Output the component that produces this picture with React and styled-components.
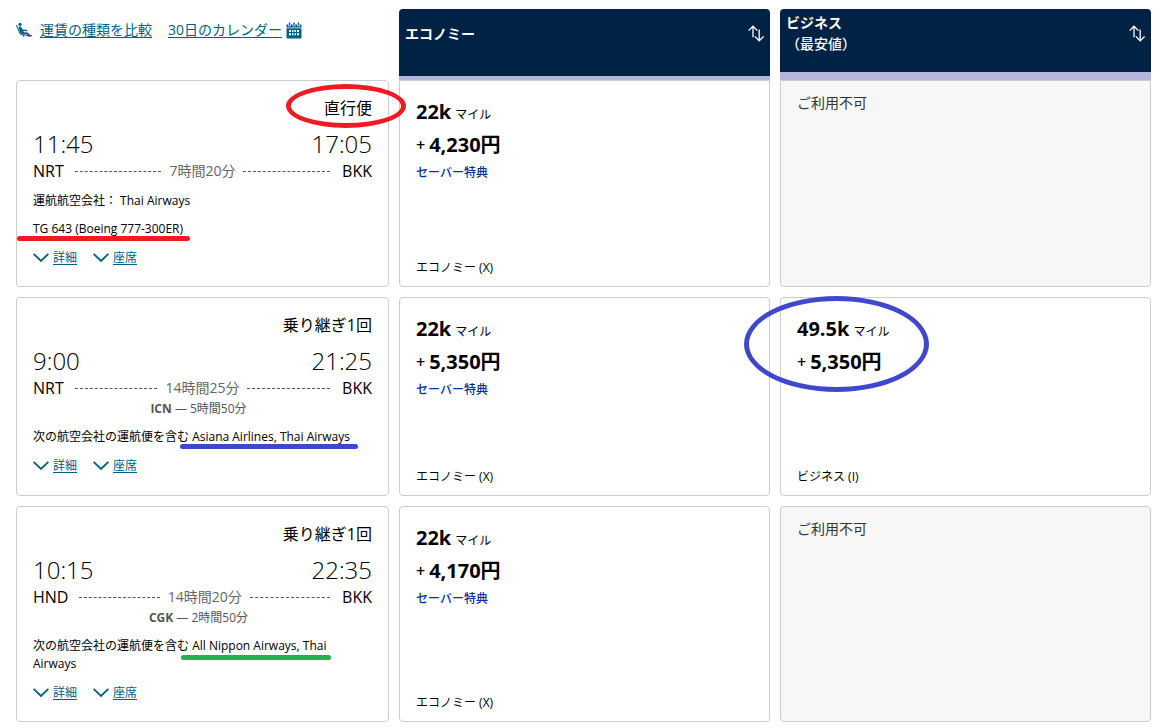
import React from "react";
import styled, { createGlobalStyle, css } from "styled-components";

const GlobalStyle = createGlobalStyle`
  *, *::before, *::after { box-sizing: border-box; }
  body {
    margin: 0;
    background: #fff;
    color: #000;
    font-family: "Open Sans", "Noto Sans CJK JP", sans-serif;
    font-size: 12px;
    line-height: 18px;
  }
  h2, h3, p { margin: 0; font: inherit; }
  button { border: 0; padding: 0; background: none; font: inherit; color: inherit; cursor: pointer; }
`;

const colors = {
  navy: "#002244",
  link: "#005f83",
  saver: "#00309c",
  lavender: "#b5b5dc",
  border: "#ccc",
  muted: "#555",
  red: "#ed1c24",
  blue: "#3f48cc",
  green: "#22b14c",
};

const Page = styled.main`
  padding: 9px 16px 6px;
`;

const columns = css`
  display: grid;
  grid-template-columns: minmax(0, 373fr) minmax(0, 371fr) minmax(0, 371fr);
  column-gap: 10px;
`;

const HeadRow = styled.header`
  ${columns}
`;

const Results = styled.div`
  display: flex;
  flex-direction: column;
  gap: 10px;
`;

const ResultRow = styled.article`
  ${columns}
  min-height: 199px;
`;

const Tools = styled.nav`
  display: flex;
  align-items: center;
  gap: 16px;
  height: 42px;
  color: ${colors.link};
  font-size: 14px;
  line-height: 20px;
`;

const Tool = styled.span`
  display: flex;
  align-items: center;
  gap: ${(p) => p.$gap}px;
`;

const ToolLink = styled.a`
  color: inherit;
  white-space: nowrap;
  text-underline-offset: 2px;
`;

const ColumnHead = styled.div`
  height: 71px;
  padding: 0 6px;
  border-bottom: ${(p) => p.$bar}px solid ${colors.lavender};
  border-radius: 4px 4px 0 0;
  background: ${colors.navy};
  color: #fff;
`;

const HeadLine = styled.div`
  display: flex;
  align-items: center;
  justify-content: space-between;
  height: 48px;
`;

const HeadTitle = styled.h2`
  font-size: 14px;
  font-weight: 700;
  line-height: 21px;
`;

const HeadNote = styled.span`
  display: block;
  font-weight: 500;
`;

const SortButton = styled.button`
  display: flex;
`;

const Card = styled.section`
  border: 1px solid ${colors.border};
  border-radius: ${(p) => (p.$flat ? "0 0 4px 4px" : "4px")};
  background: ${(p) => (p.$off ? "#f7f7f7" : "#fff")};
`;

const FlightCard = styled(Card)`
  padding: 15px 16px 18px;
`;

const Stops = styled.p`
  margin-bottom: 8px;
  text-align: right;
  font-size: 16px;
  line-height: 24px;
`;

const Times = styled.div`
  display: flex;
  justify-content: space-between;
  font-size: 24px;
  font-weight: 300;
  line-height: 32px;
`;

const Route = styled.div`
  display: flex;
  align-items: center;
  font-size: 16px;
  line-height: 22px;
`;

const Dashes = styled.span`
  flex: 1;
  border-top: 1px dashed ${colors.muted};
  margin: ${(p) => (p.$end ? "0 12px 0 8px" : "0 8px 0 11px")};
`;

const Duration = styled.span`
  color: #666;
  font-size: 14px;
`;

const Layover = styled.p`
  padding-right: 8px;
  color: ${colors.muted};
  text-align: center;
  line-height: 19px;
`;

const Details = styled.div`
  display: flex;
  flex-direction: column;
  gap: 10px;
  margin-top: 10px;
`;

const DetailLinks = styled.div`
  display: flex;
  gap: 16px;
`;

const DetailButton = styled.button`
  display: flex;
  align-items: center;
  gap: 4px;
  color: ${colors.link};
  line-height: 20px;
  text-decoration: underline;
  text-underline-offset: 2px;
`;

const FareCard = styled(Card)`
  display: flex;
  flex-direction: column;
  padding: 15px 16px 9px;
`;

const Price = styled.div`
  position: relative;
  display: flex;
  flex-direction: column;
  gap: 1px;
  align-self: flex-start;
`;

const PriceLine = styled.p`
  display: flex;
  align-items: ${(p) => (p.$baseline ? "baseline" : "center")};
  gap: 4px;
  height: 32px;
  line-height: 32px;
`;

const Amount = styled.strong`
  font-size: 20px;
  font-weight: 700;
`;

const Unit = styled.span`
  font-size: 12px;
`;

const Plus = styled.span`
  font-size: 16px;
  font-weight: 600;
  line-height: 28px;
`;

const Saver = styled.p`
  margin-top: 2px;
  color: ${colors.saver};
  font-weight: 500;
  line-height: 20px;
`;

const FareClass = styled.p`
  margin-top: auto;
`;

const Unavailable = styled(Card)`
  padding: 12px 16px;
  color: #333;
  font-size: 14px;
  line-height: 20px;
`;

const Marked = styled.span`
  position: relative;
  display: inline-block;
`;

const Underline = styled.span`
  position: absolute;
  bottom: ${(p) => -p.$drop}px;
  left: ${(p) => -p.$left}px;
  right: ${(p) => -p.$right}px;
  height: 5px;
  border-radius: 3px;
  background: ${(p) => p.$color};
`;

const Ring = styled.span`
  position: absolute;
  z-index: 1;
  left: ${(p) => -p.$left}px;
  top: ${(p) => -p.$top}px;
  width: ${(p) => p.$width}px;
  height: ${(p) => p.$height}px;
  border: 5px solid ${(p) => p.$color};
  border-radius: 50%;
  pointer-events: none;
`;

const SeatIcon = () => (
  <svg width="16" height="16" viewBox="0 0 16 16" aria-hidden="true">
    <circle cx="4" cy="2.4" r="1.6" fill="currentColor" />
    <path d="M.6 3.6 3.6 10.6Q4.4 12.6 6.4 12.8L13 13.4" fill="none" stroke="currentColor" strokeWidth="1.1" strokeLinecap="round" />
    <path d="M2.4 4.8 4.6 4.4 6.8 7.4 11.4 8v1.2L7.2 9 8 10.2l4 .3 2.2 2.7 1.6-.4.2 1.2-2.4.9-2.4-2.7-5.4-.3Q4.6 11.6 4 10z" fill="currentColor" />
    <path d="M7.4 13v1.8M12 13.2v1.6" stroke="currentColor" strokeWidth="1" />
  </svg>
);

const CalendarIcon = () => (
  <svg width="16" height="17" viewBox="0 0 16 17" aria-hidden="true">
    <path d="M.5 2.5h1.7v1.8h2.6V2.5h1.9v1.8h2.6V2.5h1.9v1.8h2.6V2.5h1.7V5.4H.5z" fill="currentColor" />
    <path d="M2.8.5h1.4v3H2.8zM7.3.5h1.4v3H7.3zM11.8.5h1.4v3h-1.4z" fill="currentColor" />
    <path d="M.5 6.2h15v9.3q0 1-1 1h-13q-1 0-1-1z" fill="currentColor" />
    <path d="M3 8h2v2H3zM6 8h1.5v2H6zM8.5 8h1.5v2H8.500zM11 8h2v2h-2zM3 11.2h2v2H3zM6 11.2h1.5v2H6zM8.500 11.2h1.5v2H8.500zM11 11.2h2v2h-2z" fill="#fff" />
  </svg>
);

const SortIcon = () => (
  <svg width="16" height="17" viewBox="0 0 16 17" fill="none" stroke="currentColor" strokeWidth="1.3" aria-hidden="true">
    <path d="M5 12.2V1.4M.6 5.6 5 1.2l4.4 4.4M11.2 4.6v11M6.8 11.4l4.4 4.4 4.4-4.4" />
  </svg>
);

const ChevronIcon = () => (
  <svg width="16" height="10" viewBox="0 0 16 10" fill="none" stroke="currentColor" strokeWidth="1.8" aria-hidden="true">
    <path d="M.6.8 8 8l7.4-7.2" />
  </svg>
);

const fareColumns = [
  { title: "エコノミー", bar: 4 },
  { title: "ビジネス", note: "（最安値）", bar: 8 },
];

const flights = [
  {
    stops: "直行便",
    ring: { $color: colors.red, $left: 38, $top: 12, $width: 120, $height: 44 },
    depart: "11:45", arrive: "17:05", from: "NRT", to: "BKK", duration: "7時間20分",
    lead: "運航航空会社： Thai Airways",
    aircraft: "TG 643 (Boeing 777-300ER)",
    mark: { $color: colors.red, $left: 16, $right: 7, $drop: 3 },
    fares: [{ miles: "22k", cash: "4,230円", saver: true, cabin: "エコノミー (X)" }, null],
  },
  {
    stops: "乗り継ぎ1回",
    depart: "9:00", arrive: "21:25", from: "NRT", to: "BKK", duration: "14時間25分",
    layover: { code: "ICN", time: "5時間50分" },
    lead: "次の航空会社の運航便を含む ",
    airlines: "Asiana Airlines, Thai Airways",
    mark: { $color: colors.blue, $left: 12, $right: 8, $drop: 3 },
    fares: [
      { miles: "22k", cash: "5,350円", saver: true, cabin: "エコノミー (X)" },
      {
        miles: "49.5k", cash: "5,350円", cabin: "ビジネス (I)",
        ring: { $color: colors.blue, $left: 53, $top: 17, $width: 185, $height: 96 },
      },
    ],
  },
  {
    stops: "乗り継ぎ1回",
    depart: "10:15", arrive: "22:35", from: "HND", to: "BKK", duration: "14時間20分",
    layover: { code: "CGK", time: "2時間50分" },
    lead: "次の航空会社の運航便を含む ",
    airlines: "All Nippon Airways, Thai",
    rest: " Airways",
    mark: { $color: colors.green, $left: 11, $right: 5, $drop: 5 },
    fares: [{ miles: "22k", cash: "4,170円", saver: true, cabin: "エコノミー (X)" }, null],
  },
];

function Flight({ flight }) {
  return (
    <FlightCard>
      <Stops>
        <Marked>
          {flight.stops}
          {flight.ring && <Ring {...flight.ring} />}
        </Marked>
      </Stops>
      <Times>
        <time>{flight.depart}</time>
        <time>{flight.arrive}</time>
      </Times>
      <Route>
        <span>{flight.from}</span>
        <Dashes />
        <Duration>{flight.duration}</Duration>
        <Dashes $end />
        <span>{flight.to}</span>
      </Route>
      {flight.layover && (
        <Layover>
          <b>{flight.layover.code}</b> — {flight.layover.time}
        </Layover>
      )}
      <Details>
        <p>
          {flight.lead}
          {flight.airlines && (
            <Marked>
              {flight.airlines}
              <Underline {...flight.mark} />
            </Marked>
          )}
          {flight.rest}
        </p>
        {flight.aircraft && (
          <p>
            <Marked>
              {flight.aircraft}
              <Underline {...flight.mark} />
            </Marked>
          </p>
        )}
        <DetailLinks>
          <DetailButton type="button"><ChevronIcon />詳細</DetailButton>
          <DetailButton type="button"><ChevronIcon />座席</DetailButton>
        </DetailLinks>
      </Details>
    </FlightCard>
  );
}

function Fare({ fare, flat }) {
  if (!fare) return <Unavailable $off $flat={flat}>ご利用不可</Unavailable>;
  return (
    <FareCard $flat={flat}>
      <Price>
        <PriceLine $baseline><Amount>{fare.miles}</Amount><Unit>マイル</Unit></PriceLine>
        <PriceLine><Plus>+</Plus><Amount>{fare.cash}</Amount></PriceLine>
        {fare.ring && <Ring {...fare.ring} />}
      </Price>
      {fare.saver && <Saver>セーバー特典</Saver>}
      <FareClass>{fare.cabin}</FareClass>
    </FareCard>
  );
}

export default function App() {
  return (
    <Page lang="ja">
      <GlobalStyle />
      <HeadRow>
        <Tools>
          <Tool $gap={8}><SeatIcon /><ToolLink href="#compare">運賃の種類を比較</ToolLink></Tool>
          <Tool $gap={4}><ToolLink href="#calendar">30日のカレンダー</ToolLink><CalendarIcon /></Tool>
        </Tools>
        {fareColumns.map((c) => (
          <ColumnHead key={c.title} $bar={c.bar}>
            <HeadLine>
              <HeadTitle>{c.title}{c.note && <HeadNote>{c.note}</HeadNote>}</HeadTitle>
              <SortButton type="button" aria-label={`${c.title} 並べ替え`}><SortIcon /></SortButton>
            </HeadLine>
          </ColumnHead>
        ))}
      </HeadRow>
      <Results>
        {flights.map((f, i) => (
          <ResultRow key={f.depart}>
            <Flight flight={f} />
            {f.fares.map((fare, j) => <Fare key={j} fare={fare} flat={i === 0} />)}
          </ResultRow>
        ))}
      </Results>
    </Page>
  );
}
